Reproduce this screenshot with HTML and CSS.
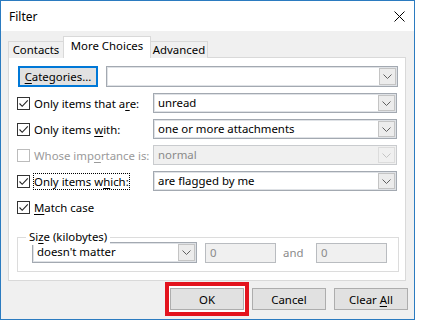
FILE: index.html
```html
<!DOCTYPE html>
<html lang="en">
<head>
  <meta charset="UTF-8" />
  <title>Filter</title>
  <link rel="stylesheet" href="styles.css">
</head>
<body>

  <div class="window">
    <!-- Title bar -->
    <div class="titlebar">
      <span class="title">Filter</span>
      <svg class="close" width="11" height="11" viewBox="0 0 11 11">
        <path d="M0.5 0.5 L10.5 10.5 M10.5 0.5 L0.5 10.5" stroke="#000" stroke-width="1" fill="none"/>
      </svg>
    </div>

    <div class="client">
      <div class="tabs">
        <div class="tab contacts">Contacts</div>
        <div class="tab active">More Choices</div>
        <div class="tab advanced">Advanced</div>
      </div>

      <div class="panel">
        <div class="row first">
          <button class="btn btn-default"><u>C</u>ategories...</button>
          <div class="combo wide">
            <span class="value"></span>
            <span class="arrow"><svg width="9" height="5" viewBox="0 0 9 5"><path d="M0.5 0.5 L4.5 4.5 L8.5 0.5" stroke="#606060" fill="none"/></svg></span>
          </div>
        </div>

        <div class="row">
          <label class="check"><span class="box checked"><svg width="11" height="11" viewBox="0 0 11 11"><path d="M1.5 5.5 L4.2 8.3 L9.8 2.3" stroke="#222" stroke-width="1.1" fill="none"/></svg></span><span class="text">Only items that a<u>r</u>e:</span></label>
          <div class="combo">
            <span class="value">unread</span>
            <span class="arrow"><svg width="9" height="5" viewBox="0 0 9 5"><path d="M0.5 0.5 L4.5 4.5 L8.5 0.5" stroke="#606060" fill="none"/></svg></span>
          </div>
        </div>

        <div class="row">
          <label class="check"><span class="box checked"><svg width="11" height="11" viewBox="0 0 11 11"><path d="M1.5 5.5 L4.2 8.3 L9.8 2.3" stroke="#222" stroke-width="1.1" fill="none"/></svg></span><span class="text">Only items <u>w</u>ith:</span></label>
          <div class="combo">
            <span class="value">one or more attachments</span>
            <span class="arrow"><svg width="9" height="5" viewBox="0 0 9 5"><path d="M0.5 0.5 L4.5 4.5 L8.5 0.5" stroke="#606060" fill="none"/></svg></span>
          </div>
        </div>

        <div class="row">
          <label class="check disabled"><span class="box"></span><span class="text">Whose imp<u>o</u>rtance is:</span></label>
          <div class="combo disabled">
            <span class="value">normal</span>
            <span class="arrow"><svg width="9" height="5" viewBox="0 0 9 5"><path d="M0.5 0.5 L4.5 4.5 L8.5 0.5" stroke="#c4c4c4" fill="none"/></svg></span>
          </div>
        </div>

        <div class="row">
          <label class="check"><span class="box checked"><svg width="11" height="11" viewBox="0 0 11 11"><path d="M1.5 5.5 L4.2 8.3 L9.8 2.3" stroke="#222" stroke-width="1.1" fill="none"/></svg></span><span class="text focus">Only items w<u>h</u>ich:</span></label>
          <div class="combo">
            <span class="value">are flagged by me</span>
            <span class="arrow"><svg width="9" height="5" viewBox="0 0 9 5"><path d="M0.5 0.5 L4.5 4.5 L8.5 0.5" stroke="#606060" fill="none"/></svg></span>
          </div>
        </div>

        <div class="row">
          <label class="check"><span class="box checked"><svg width="11" height="11" viewBox="0 0 11 11"><path d="M1.5 5.5 L4.2 8.3 L9.8 2.3" stroke="#222" stroke-width="1.1" fill="none"/></svg></span><span class="text"><u>M</u>atch case</span></label>
        </div>

        <div class="group">
          <span class="group-label">Si<u>z</u>e (kilobytes)</span>
          <div class="size-row">
            <div class="combo size">
              <span class="value">doesn't matter</span>
              <span class="arrow"><svg width="9" height="5" viewBox="0 0 9 5"><path d="M0.5 0.5 L4.5 4.5 L8.5 0.5" stroke="#606060" fill="none"/></svg></span>
            </div>
            <div class="input disabled">0</div>
            <span class="and">and</span>
            <div class="input disabled">0</div>
          </div>
        </div>
      </div>

      <div class="buttons">
        <div class="highlight"><button class="btn">OK</button></div>
        <button class="btn cancel">Cancel</button>
        <button class="btn clear">Clear <u>A</u>ll</button>
      </div>
    </div>
  </div>

</body>
</html>
```

FILE: styles.css
```css
* {
  box-sizing: border-box;
}

body {
  margin: 0;
  background-color: #ffffff;
  font-family: "Noto Sans", "DejaVu Sans", sans-serif;
  font-size: 11.4px;
  color: #000000;
}

u {
  text-decoration-thickness: 1px;
  text-underline-offset: 2px;
}

.window {
  width: 415px;
  height: 320px;
  border: 1px solid #2b7bc0;
  display: flex;
  flex-direction: column;
}

.titlebar {
  height: 30px;
  display: flex;
  align-items: center;
  justify-content: space-between;
  padding: 0 9px 0 8px;
  background-color: #ffffff;
}

.title {
  font-size: 12px;
}

.client {
  flex: 1;
  background-color: #f0f0f0;
  padding: 6px 6px 0 7px;
}

/* tabs */
.tabs {
  display: flex;
  align-items: flex-end;
  height: 21px;
  margin-bottom: -1px;
}

.tab {
  height: 17px;
  line-height: 15px;
  text-align: center;
  border: 1px solid #d9d9d9;
  border-bottom: none;
  background-color: #f0f0f0;
  white-space: nowrap;
}

.tab.contacts {
  width: 56px;
}

.tab.advanced {
  width: 58px;
}

.tab.active {
  position: relative;
  z-index: 1;
  width: 88px;
  height: 22px;
  line-height: 17px;
  margin: 0 -1px;
  background-color: #ffffff;
}

.panel {
  width: 398px;
  height: 224px;
  background-color: #ffffff;
  border: 1px solid #d9d9d9;
  padding: 8px 7px 0 9px;
  display: flex;
  flex-direction: column;
  gap: 6px;
}

.row {
  display: flex;
  align-items: center;
  height: 20px;
}

.row.first {
  height: 21px;
}

/* buttons */
.btn {
  font-family: inherit;
  font-size: 11.4px;
  color: #000000;
  width: 74px;
  height: 22px;
  padding: 0;
  background-color: #e1e1e1;
  border: 1px solid #adadad;
}

.btn-default {
  width: 80px;
  height: 21px;
  border: 1px solid #0078d7;
  box-shadow: inset 0 0 0 1px #0078d7;
}

/* combos */
.combo {
  display: flex;
  align-items: stretch;
  width: 244px;
  height: 20px;
  border: 1px solid #a3a9b1;
  box-shadow: inset 0 0 0 1px #dfe2e6;
  background-color: #ffffff;
}

.combo.wide {
  width: 292px;
  height: 21px;
  margin-left: 8px;
}

.combo .value {
  flex: 1;
  padding-left: 4px;
  line-height: 17px;
  white-space: nowrap;
}

.combo .arrow {
  width: 17px;
  margin: 1px;
  display: flex;
  align-items: center;
  justify-content: center;
  background-color: #ececec;
  border: 1px solid #c4c4c4;
}

.combo.disabled {
  background-color: #f0f0f0;
  border-color: #c9cbce;
  box-shadow: none;
  color: #8a8a8a;
}

.combo.disabled .arrow {
  border-color: #dcdcdc;
  background-color: #f0f0f0;
}

/* checkboxes */
.check {
  width: 136px;
  margin-left: -1px;
  display: flex;
  align-items: center;
  white-space: nowrap;
}

.box {
  flex: none;
  width: 13px;
  height: 13px;
  border: 1px solid #333333;
  background-color: #ffffff;
  margin-right: 4px;
  display: flex;
  align-items: center;
  justify-content: center;
}

.check.disabled {
  color: #9a9a9a;
}

.check.disabled .box {
  border-color: #bcbcbc;
}

.focus {
  outline: 1px dotted #000000;
  outline-offset: 0;
  line-height: 15px;
}

/* size group */
.group {
  margin-top: 14px;
  margin-left: -1px;
  width: 382px;
  height: 35px;
  border: 1px solid #dcdcdc;
  padding: 0 0 0 14px;
  display: flex;
  flex-direction: column;
  align-items: flex-start;
}

.group-label {
  position: relative;
  z-index: 1;
  margin: -9px 0 -3px -6px;
  padding: 0 3px;
  line-height: 16px;
  background-color: #ffffff;
}

.size-row {
  display: flex;
  align-items: center;
}

.combo.size {
  width: 165px;
  height: 21px;
}

.input {
  width: 71px;
  height: 20px;
  margin-left: 8px;
  padding-left: 4px;
  line-height: 18px;
  border: 1px solid #b9bcc0;
}

.input.disabled {
  background-color: #f0f0f0;
  color: #8a8a8a;
}

.and {
  color: #8a8a8a;
  margin-left: 7px;
  width: 25px;
}

/* bottom buttons */
.buttons {
  display: flex;
  align-items: center;
  justify-content: flex-end;
  margin-top: 1px;
}

.highlight {
  border: 4px solid #e3131d;
  padding: 2px 1px;
  background-color: #ffffff;
}

.highlight .btn {
  display: block;
}

.cancel {
  margin-left: 3px;
}

.clear {
  margin-left: 8px;
}
```
